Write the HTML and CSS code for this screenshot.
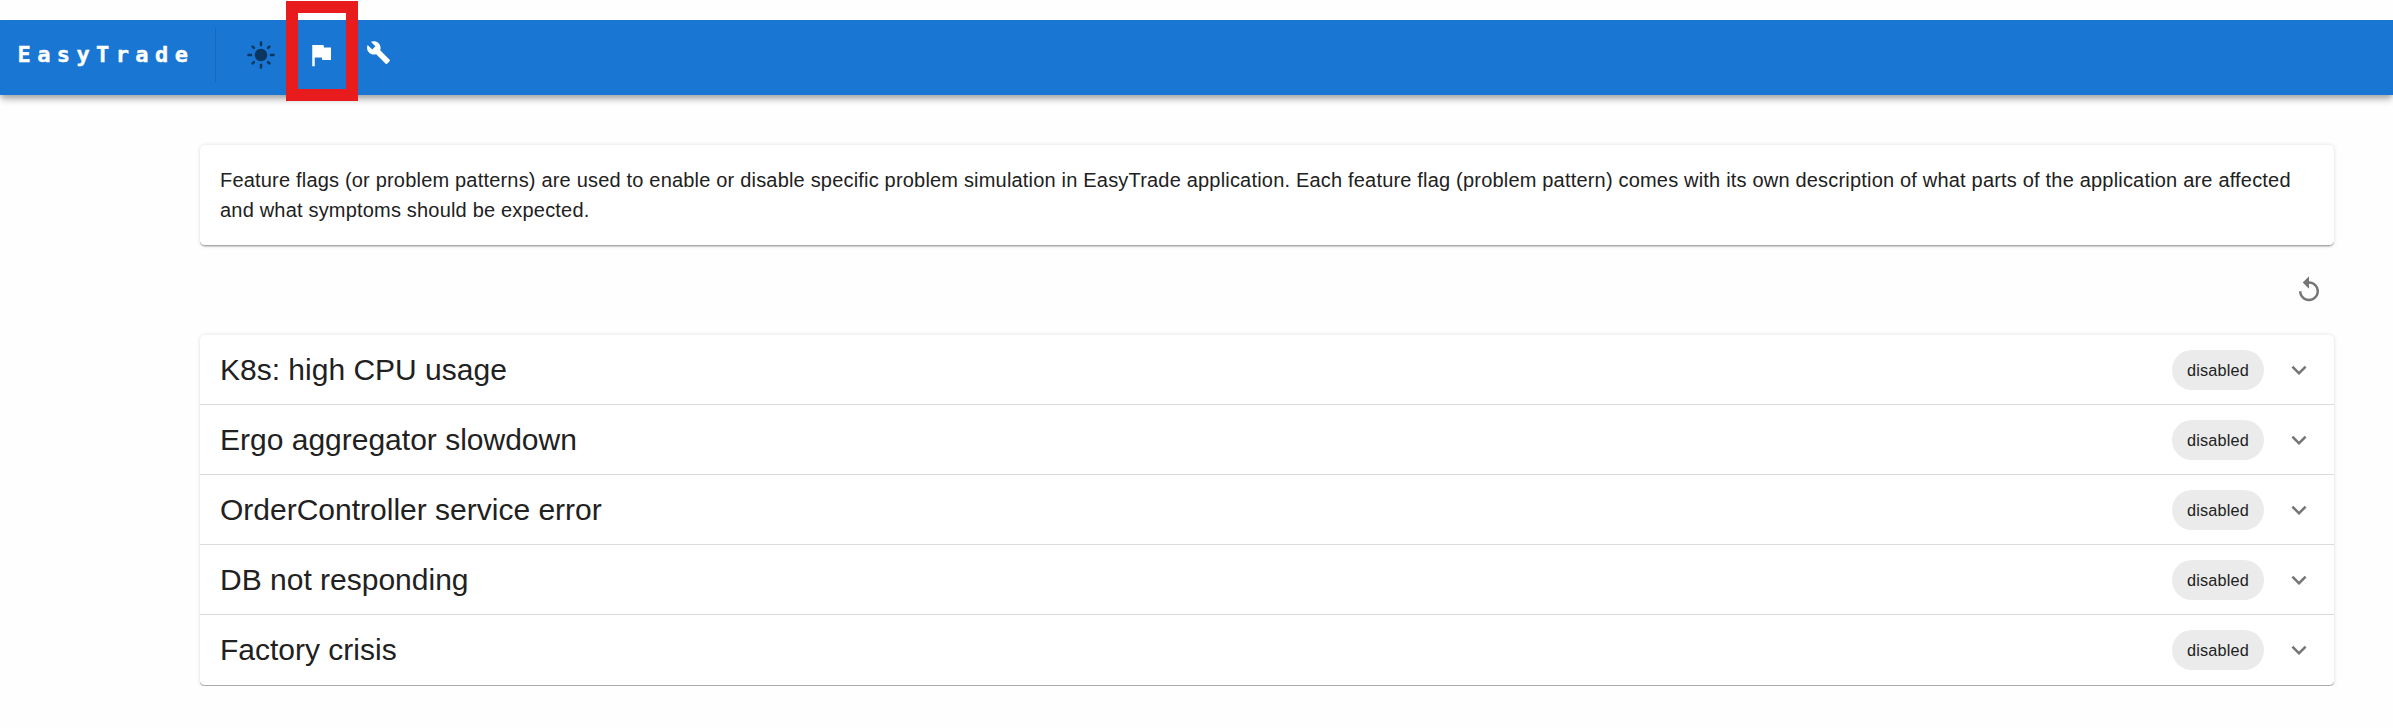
FILE: index.html
```html
<!DOCTYPE html>
<html lang="en">
<head>
<meta charset="utf-8">
<title>EasyTrade</title>
<link rel="stylesheet" href="styles.css">
</head>
<body>
<svg class="defs" width="0" height="0">
  <symbol id="chevron" viewBox="0 0 24 24"><path d="M16.59 8.59 12 13.17 7.41 8.59 6 10l6 6 6-6z"/></symbol>
</svg>
<header class="appbar">
  <div class="brand">EasyTrade</div>
  <nav class="nav">
    <svg class="icon sun" viewBox="0 0 24 24"><path d="M12 7c-2.76 0-5 2.24-5 5s2.24 5 5 5 5-2.24 5-5-2.24-5-5-5zM2 13h2c.55 0 1-.45 1-1s-.45-1-1-1H2c-.55 0-1 .45-1 1s.45 1 1 1zm18 0h2c.55 0 1-.45 1-1s-.45-1-1-1h-2c-.55 0-1 .45-1 1s.45 1 1 1zM11 2v2c0 .55.45 1 1 1s1-.45 1-1V2c0-.55-.45-1-1-1s-1 .45-1 1zm0 18v2c0 .55.45 1 1 1s1-.45 1-1v-2c0-.55-.45-1-1-1s-1 .45-1 1zM5.99 4.58a.996.996 0 0 0-1.41 0 .996.996 0 0 0 0 1.41l1.06 1.06c.39.39 1.03.39 1.41 0s.39-1.03 0-1.41L5.99 4.58zm12.37 12.37a.996.996 0 0 0-1.41 0 .996.996 0 0 0 0 1.41l1.06 1.06c.39.39 1.03.39 1.41 0a.996.996 0 0 0 0-1.41l-1.06-1.06zm1.06-10.96a.996.996 0 0 0 0-1.41.996.996 0 0 0-1.41 0l-1.06 1.06c-.39.39-.39 1.03 0 1.41s1.03.39 1.41 0l1.06-1.06zM7.05 18.36a.996.996 0 0 0 0-1.41.996.996 0 0 0-1.41 0l-1.06 1.06c-.39.39-.39 1.03 0 1.41s1.03.39 1.41 0l1.06-1.06z"/></svg>
    <div class="flag-link">
      <svg class="icon" viewBox="0 0 24 24"><path d="M14.4 6 14 4H5v17h2v-7h5.6l.4 2h7V6z"/></svg>
      <span class="marker"></span>
    </div>
    <svg class="icon wrench" viewBox="0 0 24 24"><path d="m22.7 19-9.1-9.1c.9-2.3.4-5-1.5-6.9-2-2-5-2.4-7.4-1.3L9 6 6 9 1.6 4.7C.4 7.1.9 10.1 2.9 12.1c1.9 1.9 4.6 2.4 6.9 1.5l9.1 9.1c.4.4 1 .4 1.4 0l2.3-2.3c.5-.4.5-1.1.1-1.4z"/></svg>
  </nav>
</header>
<main class="content">
  <section class="paper intro">Feature flags (or problem patterns) are used to enable or disable specific problem simulation in EasyTrade application. Each feature flag (problem pattern) comes with its own description of what parts of the application are affected<br>and what symptoms should be expected.</section>
  <div class="toolbar">
    <svg class="icon muted" viewBox="0 0 24 24"><path d="M12 5V1L7 6l5 5V7c3.31 0 6 2.69 6 6s-2.69 6-6 6-6-2.69-6-6H4c0 4.42 3.58 8 8 8s8-3.58 8-8-3.58-8-8-8z"/></svg>
  </div>
  <section class="paper flags">
    <div class="row"><h2 class="name">K8s: high CPU usage</h2><span class="chip">disabled</span><svg class="icon muted"><use href="#chevron"/></svg></div>
    <div class="row"><h2 class="name">Ergo aggregator slowdown</h2><span class="chip">disabled</span><svg class="icon muted"><use href="#chevron"/></svg></div>
    <div class="row"><h2 class="name">OrderController service error</h2><span class="chip">disabled</span><svg class="icon muted"><use href="#chevron"/></svg></div>
    <div class="row"><h2 class="name">DB not responding</h2><span class="chip">disabled</span><svg class="icon muted"><use href="#chevron"/></svg></div>
    <div class="row"><h2 class="name">Factory crisis</h2><span class="chip">disabled</span><svg class="icon muted"><use href="#chevron"/></svg></div>
  </section>
</main>
</body>
</html>
```
FILE: styles.css
```css
* { box-sizing: border-box; }
body {
  margin: 0;
  padding-top: 20px;
  background: #fefefe;
  color: #212121;
  font-family: "Liberation Sans", Arial, sans-serif;
}
.defs { position: absolute; }
.icon { display: block; flex: none; width: 30px; height: 30px; fill: currentColor; }
.muted { color: #757575; }
.appbar {
  display: flex;
  height: 75px;
  padding-left: 17px;
  background: #1976d2;
  color: #fff;
  box-shadow: 0 3px 5px -1px rgba(0,0,0,.2), 0 5px 6px 0 rgba(0,0,0,.12), 0 8px 8px -3px rgba(0,0,0,.1);
}
.brand {
  width: 199px;
  height: 54px;
  margin-top: 8px;
  border-right: 1px solid #1669bb;
  font: 700 22px/54px "DejaVu Sans Mono", monospace;
  letter-spacing: 6.4px;
  text-indent: .5px;
  -webkit-text-stroke: .4px #fff;
}
.nav { display: flex; padding: 20px 0 0 30px; }
.sun { color: #0b3660; }
.flag-link { position: relative; margin-left: 30px; }
.marker {
  position: absolute;
  left: -20px;
  top: -39px;
  width: 72px;
  height: 100px;
  border: 12px solid #e81c1c;
}
.wrench { width: 25px; height: 25px; margin-left: 30px; }
.content { width: 2134px; margin: 50px 0 0 200px; }
.paper {
  background: #fff;
  border-bottom: 1px solid #a9a9a9;
  border-radius: 5px;
  box-shadow: 0 1px 1px 0 rgba(0,0,0,.14), 0 0 4px 0 rgba(0,0,0,.12);
}
.intro {
  height: 101px;
  padding: 20px;
  font-size: 20px;
  line-height: 30px;
  letter-spacing: .19px;
  white-space: nowrap;
}
.toolbar { display: flex; justify-content: flex-end; padding: 29px 10px 30px; }
.row {
  display: flex;
  align-items: center;
  height: 70px;
  padding: 0 20px;
  border-bottom: 1px solid #dadada;
}
.row:last-child { border-bottom: 0; }
.name { flex: 1; margin: 0; font-size: 30px; line-height: 40px; font-weight: 400; }
.chip {
  width: 92px;
  height: 40px;
  margin-right: 20px;
  border-radius: 20px;
  background: #ebebeb;
  font-size: 16.25px;
  line-height: 41px;
  letter-spacing: .16px;
  text-align: center;
}
```
